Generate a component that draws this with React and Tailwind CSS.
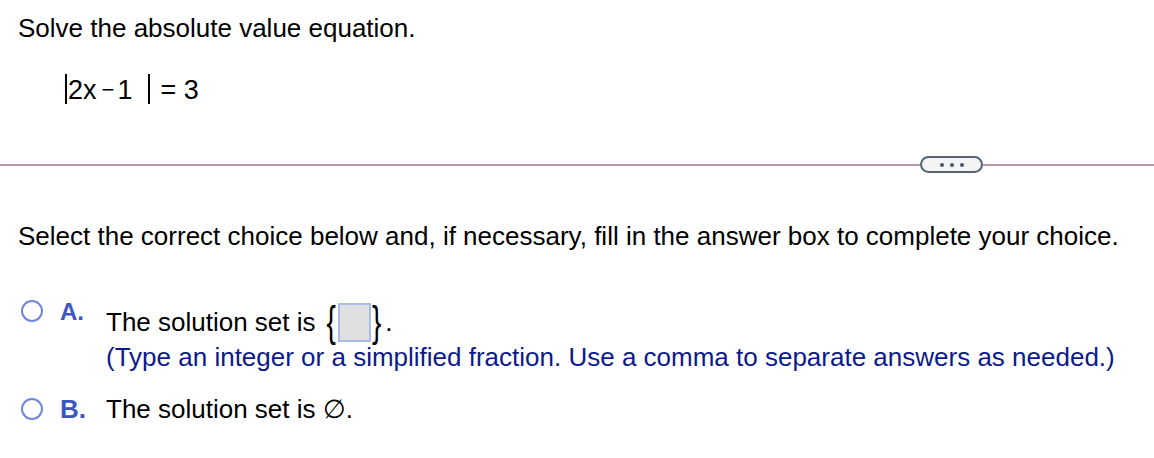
import React from "react";

function Radio() {
  return (
    <span className="block w-[22px] h-[22px] rounded-full border-[2.5px] border-[#7086d8] bg-white shrink-0" />
  );
}

function Brace({ children }) {
  return (
    <span className="inline-block text-[28px] leading-[28px] scale-y-[1.5] font-light">
      {children}
    </span>
  );
}

export default function App() {
  return (
    <div className="w-[1154px] h-[458px] bg-white text-black font-['Liberation_Sans',Arial,sans-serif] text-[26px] leading-[30px] overflow-hidden">
      {/* question */}
      <div className="pl-[18px] pt-[13px]">Solve the absolute value equation.</div>

      <div className="mt-[32px] pl-[65px] flex items-start h-[30px] text-[27px]">
        <span className="block w-[2px] h-[30px] bg-black -mt-[1px]" />
        <span className="ml-[1px]">2x</span>
        <span className="ml-[5px] text-[22px]">−</span>
        <span className="ml-[3px]">1</span>
        <span className="block w-[2px] h-[30px] bg-black -mt-[1px] ml-[16px]" />
        <span className="ml-[10px]">= 3</span>
      </div>

      {/* divider */}
      <div className="mt-[51px] flex items-center">
        <div className="w-[920px] h-[2px] bg-[#b797aa]" />
        <div className="w-[63px] h-[17px] rounded-full border-2 border-[#586270] bg-[#f3f4f6] flex items-center justify-center gap-[6px]">
          <span className="w-[4px] h-[4px] rounded-full bg-[#4b5563]" />
          <span className="w-[4px] h-[4px] rounded-full bg-[#4b5563]" />
          <span className="w-[4px] h-[4px] rounded-full bg-[#4b5563]" />
        </div>
        <div className="flex-1 h-[2px] bg-[#b797aa]" />
      </div>

      <div className="pl-[18px] mt-[48px]">
        Select the correct choice below and, if necessary, fill in the answer box to complete your choice.
      </div>

      {/* choice A */}
      <div className="mt-[51px] pl-[21px] flex items-start">
        <div className="-mt-[2px]"><Radio /></div>
        <span className="ml-[17px] w-[46px] -mt-[2px] text-[24px] leading-[24px] font-bold text-[#3d56c2]">A.</span>
        <div className="flex flex-col">
          <div className="h-[40px] flex items-center">
            <span>The solution set is</span>
            <span className="ml-[11px]"><Brace>{"{"}</Brace></span>
            <span className="block w-[33px] h-[39px] ml-[2px] bg-[#e0e0e0] border-2 border-[#a8bbea]" />
            <span className="ml-[1px]"><Brace>{"}"}</Brace></span>
            <span className="ml-[4px]">.</span>
          </div>
          <div className="text-[#0c1a8c]">
            (Type an integer or a simplified fraction. Use a comma to separate answers as needed.)
          </div>
        </div>
      </div>

      {/* choice B */}
      <div className="mt-[22px] pl-[21px] flex items-center">
        <Radio />
        <span className="ml-[17px] w-[46px] font-bold text-[#3d56c2]">B.</span>
        <span>The solution set is ∅.</span>
      </div>
    </div>
  );
}
